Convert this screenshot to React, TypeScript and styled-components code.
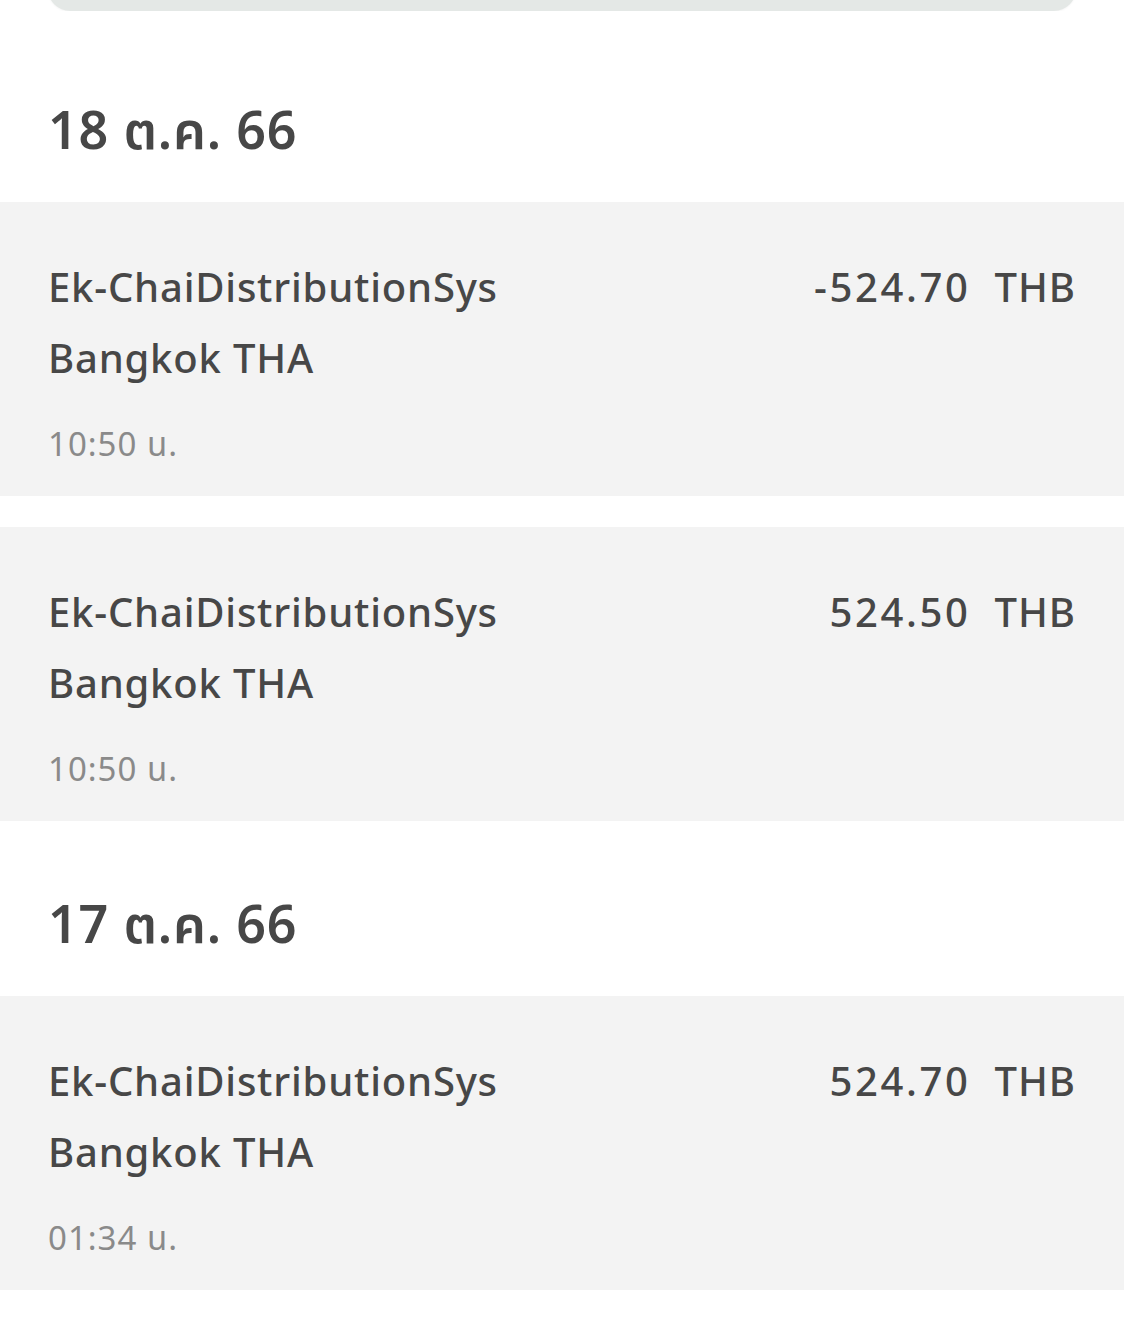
import styled, { createGlobalStyle } from 'styled-components';

type Txn = {
  id: number;
  name: string;
  place: string;
  time: string;
  amount: string;
};

type Day = {
  label: string;
  items: Txn[];
};

const days: Day[] = [
  {
    label: '18 ต.ค. 66',
    items: [
      { id: 1, name: 'Ek-ChaiDistributionSys', place: 'Bangkok THA', time: '10:50 น.', amount: '-524.70' },
      { id: 2, name: 'Ek-ChaiDistributionSys', place: 'Bangkok THA', time: '10:50 น.', amount: '524.50' },
    ],
  },
  {
    label: '17 ต.ค. 66',
    items: [
      { id: 3, name: 'Ek-ChaiDistributionSys', place: 'Bangkok THA', time: '01:34 น.', amount: '524.70' },
    ],
  },
];

const App = () => {
  return (
    <>
      <GlobalStyle />
      <StyledPage>
        <StyledSummaryClip>
          <StyledSummary />
        </StyledSummaryClip>
        <StyledList>
          {days.map((day) => (
            <section key={day.label}>
              <StyledDate>{day.label}</StyledDate>
              <StyledCards>
                {day.items.map((t) => (
                  <StyledCard key={t.id}>
                    <StyledInfo>
                      <StyledName>{t.name}</StyledName>
                      <StyledName>{t.place}</StyledName>
                      <StyledTime>{t.time}</StyledTime>
                    </StyledInfo>
                    <StyledAmount>
                      <StyledValue>{t.amount}</StyledValue>
                      <span>THB</span>
                    </StyledAmount>
                  </StyledCard>
                ))}
              </StyledCards>
            </section>
          ))}
        </StyledList>
      </StyledPage>
    </>
  );
};

export default App;

const GlobalStyle = createGlobalStyle`
  body {
    margin: 0;
    background: #ffffff;
    font-family: 'Noto Sans', 'Noto Sans Thai', 'Noto Sans CJK SC', sans-serif;
    color: #474747;
  }
`;

const StyledPage = styled.div`
  width: 1124px;
  height: 1319px;
  overflow: hidden;
  background: #ffffff;
`;

const StyledSummaryClip = styled.div`
  height: 11px;
  padding: 0 48px;
  display: flex;
  flex-direction: column;
  justify-content: flex-end;
  overflow: hidden;
`;

const StyledSummary = styled.div`
  flex: none;
  height: 60px;
  border-radius: 22px;
  background: #e4e8e6;
  box-shadow: 0 1px 2px rgba(0, 0, 0, 0.04);
`;

const StyledList = styled.div`
  padding-top: 16px;
`;

const StyledDate = styled.h2`
  margin: 0;
  padding: 35px 48px 0;
  box-sizing: border-box;
  height: 175px;
  display: flex;
  align-items: center;
  font-size: 52px;
  font-weight: 600;
  color: #474747;
  letter-spacing: 0.8px;
`;

const StyledCards = styled.div`
  display: flex;
  flex-direction: column;
  gap: 31px;
`;

const StyledCard = styled.div`
  height: 294px;
  box-sizing: border-box;
  padding: 49px 48px 0;
  background: #f3f3f3;
  display: flex;
  justify-content: space-between;
  align-items: flex-start;
`;

const StyledInfo = styled.div`
  display: flex;
  flex-direction: column;
`;

const StyledName = styled.div`
  font-size: 40px;
  line-height: 71px;
  font-weight: 500;
  letter-spacing: 0.8px;
  color: #474747;
`;

const StyledTime = styled.div`
  margin-top: 31px;
  font-size: 33px;
  line-height: 40px;
  letter-spacing: 1px;
  color: #8a8a8a;
`;

const StyledAmount = styled.div`
  display: flex;
  gap: 24px;
  font-size: 40px;
  line-height: 71px;
  font-weight: 500;
  color: #474747;
  letter-spacing: 1px;
`;

const StyledValue = styled.span`
  letter-spacing: 2.6px;
`;
